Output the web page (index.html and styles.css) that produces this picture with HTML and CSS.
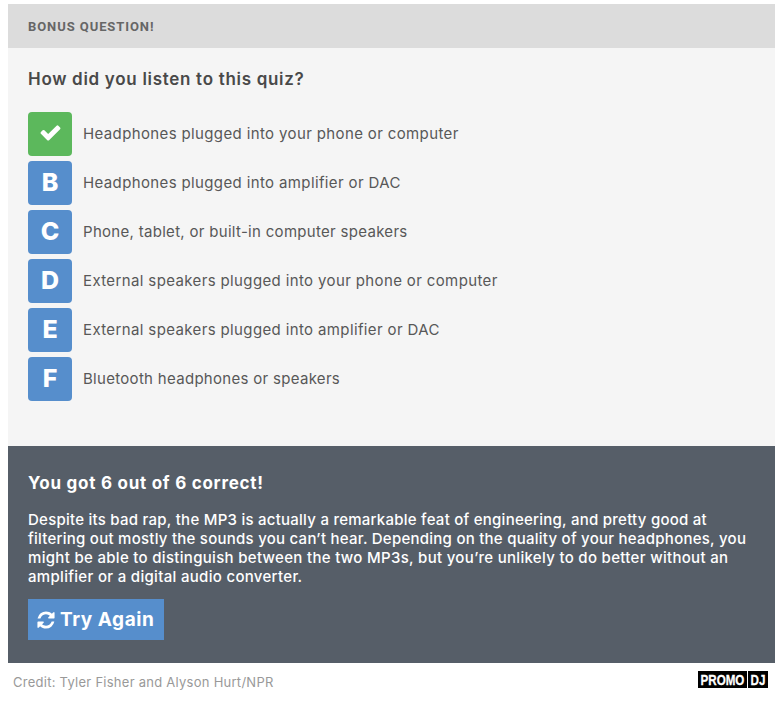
FILE: index.html
```html
<!DOCTYPE html>
<html lang="en">
<head>
  <meta charset="UTF-8">
  <meta name="viewport" content="width=device-width, initial-scale=1">
  <title>Audio Quality Quiz</title>
  <link rel="stylesheet" href="styles.css">
</head>
<body>
  <div class="quiz">
    <div class="quiz-header">BONUS QUESTION!</div>

    <div class="question">
      <h2>How did you listen to this quiz?</h2>
      <ul class="answers">
        <li>
          <button class="letter correct" aria-label="Selected">
            <svg viewBox="0 0 1792 1792" width="23" height="23"><path d="M1671 566q0 40-28 68l-724 724-136 136q-28 28-68 28t-68-28l-136-136-362-362q-28-28-28-68t28-68l136-136q28-28 68-28t68 28l294 295 656-657q28-28 68-28t68 28l136 136q28 28 28 68z"/></svg>
          </button>
          <span>Headphones plugged into your phone or computer</span>
        </li>
        <li><button class="letter">B</button><span>Headphones plugged into amplifier or DAC</span></li>
        <li><button class="letter">C</button><span class="snug">Phone, tablet, or built-in computer speakers</span></li>
        <li><button class="letter">D</button><span>External speakers plugged into your phone or computer</span></li>
        <li><button class="letter">E</button><span>External speakers plugged into amplifier or DAC</span></li>
        <li><button class="letter">F</button><span class="snug">Bluetooth headphones or speakers</span></li>
      </ul>
    </div>

    <div class="results">
      <h3>You got 6 out of 6 correct!</h3>
      <p>
        <span>Despite its bad rap, the MP3 is actually a remarkable feat of engineering, and pretty good at</span>
        <span>filtering out mostly the sounds you can’t hear. Depending on the quality of your headphones, you</span>
        <span class="loose">might be able to distinguish between the two MP3s, but you’re unlikely to do better without an</span>
        <span class="loose">amplifier or a digital audio converter.</span>
      </p>
      <button class="try-again">
        <svg viewBox="0 0 1792 1792" width="20" height="20"><path d="M1639 1056q0 5-1 7-64 268-268 434.5t-478 166.5q-146 0-282.5-55t-243.5-157l-129 129q-19 19-45 19t-45-19-19-45v-448q0-26 19-45t45-19h448q26 0 45 19t19 45-19 45l-137 137q71 66 161 102t187 36q134 0 250-65t186-179q11-17 53-117 8-23 30-23h192q13 0 22.5 9.5t9.5 22.5zm25-800v448q0 26-19 45t-45 19h-448q-26 0-45-19t-19-45 19-45l138-138q-148-137-349-137-134 0-250 65t-186 179q-11 17-53 117-8 23-30 23h-199q-13 0-22.5-9.5t-9.5-22.5v-7q65-268 270-434.5t480-166.5q146 0 284 55.5t245 156.5l130-129q19-19 45-19t45 19 19 45z"/></svg>
        <span>Try Again</span>
      </button>
    </div>
  </div>

  <div class="footer">
    <span class="credit">Credit: Tyler Fisher and Alyson Hurt/NPR</span>
    <svg class="logo" width="70" height="17" viewBox="0 0 70 17">
      <rect width="70" height="17"/>
      <text transform="translate(2.5 14) scale(0.75 1)">PROMO</text>
      <path d="M49.5 0v17" stroke="#fff"/>
      <text transform="translate(52.5 14) scale(0.75 1)">DJ</text>
    </svg>
  </div>
</body>
</html>
```
FILE: styles.css
```css
* {
  box-sizing: border-box;
}

body {
  margin: 0;
  padding: 4px 6px 0 8px;
  background: #fff;
  color: #585858;
  font-family: Inter, "Open Sans", sans-serif;
}

button {
  border: none;
  padding: 0;
  font-family: inherit;
  color: #fff;
  background: #568ecc;
  cursor: pointer;
}

svg {
  fill: currentColor;
}

.quiz-header {
  height: 44px;
  padding-left: 20px;
  background: #dcdcdc;
  color: #666;
  font: bold 13px/45px Roboto, sans-serif;
  letter-spacing: 0.92px;
}

.question {
  height: 398px;
  padding: 20px 20px 0;
  background: #f5f5f5;
}

.question h2 {
  margin: 0 0 22px;
  font-size: 17px;
  line-height: 22px;
  font-weight: 600;
  letter-spacing: 0.7px;
  color: #494949;
}

.answers {
  list-style: none;
  margin: 0;
  padding: 0;
  display: flex;
  flex-direction: column;
  gap: 5px;
}

.answers li {
  display: flex;
  align-items: center;
  gap: 11px;
  height: 44px;
  font-size: 15px;
  letter-spacing: 0.37px;
  white-space: nowrap;
}

.answers span {
  padding-bottom: 1px;
}

.answers .snug {
  letter-spacing: 0.3px;
}

.letter {
  display: flex;
  align-items: center;
  justify-content: center;
  width: 44px;
  height: 44px;
  padding-bottom: 2px;
  border-radius: 4px;
  font-size: 25px;
  line-height: 42px;
  font-weight: 800;
}

.letter.correct {
  background: #5cb85c;
}

.letter.correct svg {
  margin-bottom: 2px;
}

.results {
  height: 217px;
  padding: 26px 20px 0;
  background: #565e68;
  color: #fff;
}

.results h3 {
  margin: 0 0 16px;
  font-size: 17px;
  line-height: 22px;
  font-weight: 700;
  letter-spacing: 0.74px;
}

.results p {
  margin: 0 0 13px;
  font-size: 15px;
  line-height: 19px;
  font-weight: 500;
  letter-spacing: 0.25px;
}

.results p span {
  display: block;
  width: max-content;
  white-space: nowrap;
}

.results p .loose {
  letter-spacing: 0.31px;
}

.try-again {
  display: flex;
  align-items: center;
  gap: 4px;
  width: 136px;
  height: 41px;
  padding-left: 8px;
  font-size: 19px;
  font-weight: 700;
  letter-spacing: 0.55px;
}

.footer {
  display: flex;
  justify-content: space-between;
  align-items: flex-start;
  padding: 8px 7px 0 5px;
}

.credit {
  font-size: 13px;
  line-height: 22px;
  letter-spacing: 0.26px;
  color: #999;
}

.logo text {
  fill: #fff;
  stroke: #fff;
  stroke-width: 0.3;
  font: bold 15.5px "Liberation Sans", sans-serif;
}

.logo rect {
  fill: #000;
}
```
